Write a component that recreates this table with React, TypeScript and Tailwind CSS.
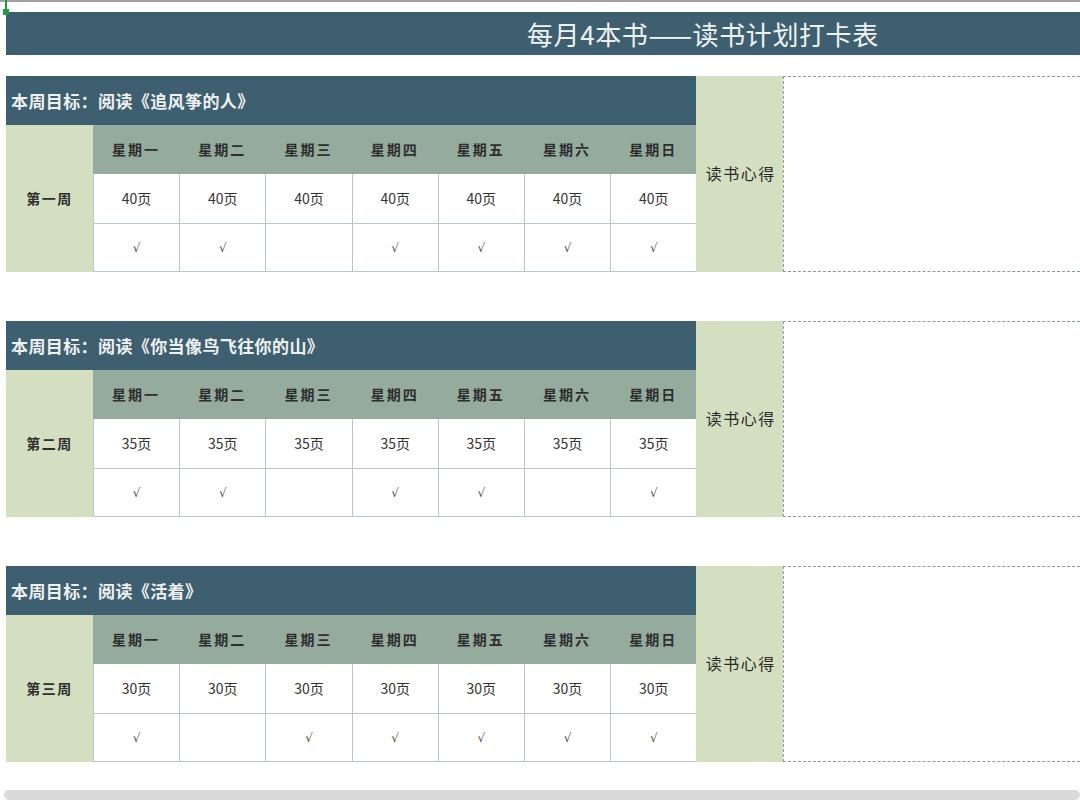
import React from "react";

const days = ["星期一", "星期二", "星期三", "星期四", "星期五", "星期六", "星期日"];

const weeks = [
  { book: "追风筝的人", label: "第一周", pages: "40页", done: [1, 1, 0, 1, 1, 1, 1] },
  { book: "你当像鸟飞往你的山", label: "第二周", pages: "35页", done: [1, 1, 0, 1, 1, 0, 1] },
  { book: "活着", label: "第三周", pages: "30页", done: [1, 0, 1, 1, 1, 1, 1] },
];

const font = { fontFamily: '"Noto Sans CJK SC", "Liberation Sans", sans-serif' };

function WeekBlock({ book, label, pages, done }: (typeof weeks)[number]) {
  return (
    <div className="grid grid-cols-[87px_repeat(7,86.2px)_87px_1fr] grid-rows-[49px_49px_49px_49px] ml-[6px]">
      {/* goal header */}
      <div className="col-span-8 bg-[#3e5f70] flex items-center pl-[5px] text-[17px] font-bold tracking-[0.4px] text-[#eef1f2]">
        本周目标：阅读《{book}》
      </div>
      {/* notes label */}
      <div className="col-start-9 row-start-1 row-span-4 bg-[#d3dfc0] flex items-center justify-center text-[16px] tracking-[1.5px] text-[#2b2b2b] pb-[2px] pl-[2px]">
        读书心得
      </div>
      {/* notes box */}
      <div className="col-start-10 row-start-1 row-span-4 border border-r-0 border-dashed border-[#8c9a9a] bg-white" />

      {/* week label */}
      <div className="col-start-1 row-start-2 row-span-3 bg-[#d3dfc0] flex items-center justify-center text-[14px] font-bold tracking-[1.5px] text-[#2f2f2f]">
        {label}
      </div>

      {days.map((d) => (
        <div
          key={d}
          className="row-start-2 bg-[#94ab9e] flex items-center justify-center text-[14px] font-bold tracking-[2px] text-[#2e2e2e]"
        >
          {d}
        </div>
      ))}
      {days.map((d) => (
        <div
          key={d + "p"}
          className="row-start-3 bg-white border-l border-[#b9c7c5] flex items-center justify-center text-[14px] text-[#333]"
        >
          {pages}
        </div>
      ))}
      {days.map((d, i) => (
        <div
          key={d + "c"}
          className="row-start-4 bg-white border-l border-t border-b border-[#b9c7c5] flex items-center justify-center text-[12px] text-[#4a4a4a] [font-family:'DejaVu_Sans',sans-serif]"
        >
          {done[i] ? "√" : ""}
        </div>
      ))}
    </div>
  );
}

export default function App() {
  return (
    <div className="relative w-[1080px] h-[802px] bg-white overflow-hidden" style={font}>
      <div className="h-[2px] bg-[#a0a0a0]" />
      {/* cell cursor marker */}
      <div className="absolute left-[5px] top-0 w-[2px] h-[10px] bg-[#1e9b3c]" />
      <div className="absolute left-[3px] top-[9px] w-[6px] h-[6px] bg-[#1e9b3c]" />

      <div className="mt-[10px] ml-[6px] h-[43px] bg-[#3e5f70] flex items-center pl-[521px] text-[26px] tracking-[0.6px] text-[#eef2f3]">
        每月4本书——读书计划打卡表
      </div>

      <div className="mt-[21px] flex flex-col gap-[49px]">
        {weeks.map((w) => (
          <WeekBlock key={w.label} {...w} />
        ))}
      </div>

      <div className="absolute left-[4px] right-0 top-[790px] h-[10px] rounded-full bg-[#dadada]" />
    </div>
  );
}
